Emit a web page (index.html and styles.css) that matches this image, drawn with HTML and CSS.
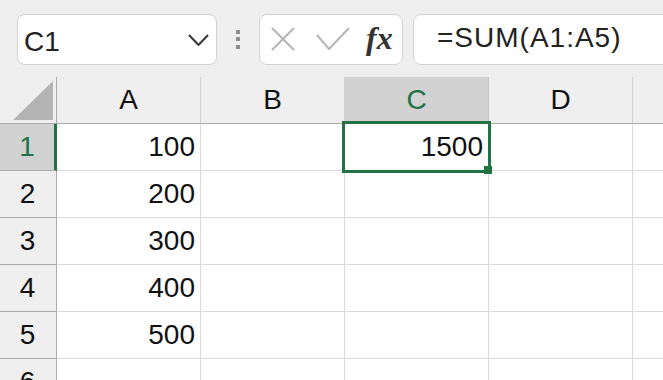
FILE: index.html
```html
<!DOCTYPE html>
<html>
<head>
<meta charset="utf-8">
<link rel="stylesheet" href="styles.css">
</head>
<body>
<div class="toolbar">
  <div class="namebox">
    <span class="name">C1</span>
    <svg class="chev" width="21" height="12" viewBox="0 0 21 12"><polyline points="1,1 10.5,11 20,1" fill="none" stroke="#333" stroke-width="2"/></svg>
  </div>
  <div class="dots"><i></i><i></i><i></i></div>
  <div class="btnbox">
    <svg class="xicon" width="24" height="24" viewBox="0 0 24 24"><path d="M1 1 L23 23 M23 1 L1 23" stroke="#b5b5b5" stroke-width="2" fill="none"/></svg>
    <svg class="check" width="34" height="24" viewBox="0 0 34 24"><polyline points="1,8 13,22 33,1" fill="none" stroke="#b5b5b5" stroke-width="2"/></svg>
    <span class="fx">fx</span>
  </div>
  <div class="formula">=SUM(A1:A5)</div>
</div>
<div class="sheet">
  <div class="corner"><svg width="40" height="39" viewBox="0 0 40 39"><polygon points="40,0 40,39 0,39" fill="#b4b4b4"/></svg></div>
  <div class="colhead">A</div>
  <div class="colhead">B</div>
  <div class="colhead sel">C</div>
  <div class="colhead">D</div>
  <div class="colhead"></div>

  <div class="rowhead sel">1</div>
  <div class="cell">100</div><div class="cell"></div><div class="cell">1500</div><div class="cell"></div><div class="cell"></div>
  <div class="rowhead">2</div>
  <div class="cell">200</div><div class="cell"></div><div class="cell"></div><div class="cell"></div><div class="cell"></div>
  <div class="rowhead">3</div>
  <div class="cell">300</div><div class="cell"></div><div class="cell"></div><div class="cell"></div><div class="cell"></div>
  <div class="rowhead">4</div>
  <div class="cell">400</div><div class="cell"></div><div class="cell"></div><div class="cell"></div><div class="cell"></div>
  <div class="rowhead">5</div>
  <div class="cell">500</div><div class="cell"></div><div class="cell"></div><div class="cell"></div><div class="cell"></div>
  <div class="rowhead">6</div>
  <div class="cell"></div><div class="cell"></div><div class="cell"></div><div class="cell"></div><div class="cell"></div>

  <div class="selection"></div>
  <div class="handle"></div>
</div>
</body>
</html>
```
FILE: styles.css
```css
html, body {
  margin: 0;
  padding: 0;
  background: #efefef;
  overflow: hidden;
  width: 663px;
  height: 380px;
}
body {
  font-family: "Liberation Sans", Arial, sans-serif;
  color: #1c1c1c;
}
.toolbar {
  display: flex;
  align-items: center;
  height: 77px;
  padding-left: 17px;
  box-sizing: border-box;
}
.namebox, .btnbox, .formula {
  height: 51px;
  background: #fff;
  border: 1px solid #d2d2d2;
  border-radius: 8px;
  box-sizing: border-box;
  display: flex;
  align-items: center;
  margin-top: 1px;
}
.namebox {
  width: 200px;
  padding-left: 6px;
  padding-right: 7px;
  justify-content: space-between;
}
.name {
  font-size: 28px;
  padding-top: 6px;
  color: #222;
}
.chev { margin-top: 2px; }
.dots {
  width: 4px;
  margin: 0 19px;
  display: flex;
  flex-direction: column;
  gap: 3.5px;
  padding-top: 1px;
}
.dots i {
  display: block;
  width: 4px;
  height: 4px;
  background: #8e8e8e;
}
.btnbox {
  width: 144px;
  padding-left: 11px;
}
.check { margin-left: 21px; margin-top: -1px; }
.fx {
  font-family: "Liberation Serif", "Times New Roman", serif;
  font-style: italic;
  font-weight: bold;
  font-size: 32px;
  color: #333;
  margin-left: 16px;
  margin-top: -2px;
}
.formula {
  flex: 1;
  margin-left: 10px;
  margin-right: -20px;
  padding-left: 23px;
  font-size: 28px;
  letter-spacing: 1px;
  color: #222;
  padding-bottom: 2px;
}
.sheet {
  position: relative;
  display: grid;
  grid-template-columns: 57px repeat(4, 144px) 31px;
  grid-auto-rows: 47px;
  height: 303px;
  overflow: hidden;
}
.sheet > div {
  box-sizing: border-box;
  font-size: 28px;
  line-height: 46px;
}
.corner {
  border-right: 1px solid #ababab;
  border-bottom: 1px solid #ababab;
  display: flex;
  align-items: flex-end;
  justify-content: flex-end;
  padding: 0 3px 3px 0;
}
.corner svg { display: block; }
.colhead {
  text-align: center;
  border-right: 1px solid #d2d2d2;
  border-bottom: 1px solid #ababab;
  color: #111;
}
.colhead.sel {
  background: #d2d2d2;
  color: #217346;
  border-right-color: #c4c4c4;
}
.rowhead {
  text-align: center;
  border-right: 1px solid #ababab;
  border-bottom: 1px solid #ababab;
  color: #111;
  padding-right: 1px;
}
.rowhead.sel {
  background: #d2d2d2;
  color: #217346;
  border-right: 3px solid #217346;
  padding-right: 0;
}
.cell {
  text-align: right;
  padding-right: 5px;
  border-right: 1px solid #dadada;
  border-bottom: 1px solid #dadada;
  background: #fff;
  color: #111;
}
.selection {
  position: absolute;
  left: 342px;
  top: 44px;
  width: 149px;
  height: 52px;
  border: 3px solid #217346;
}
.handle {
  position: absolute;
  left: 484px;
  top: 89px;
  width: 8px;
  height: 8px;
  background: #217346;
}
```
